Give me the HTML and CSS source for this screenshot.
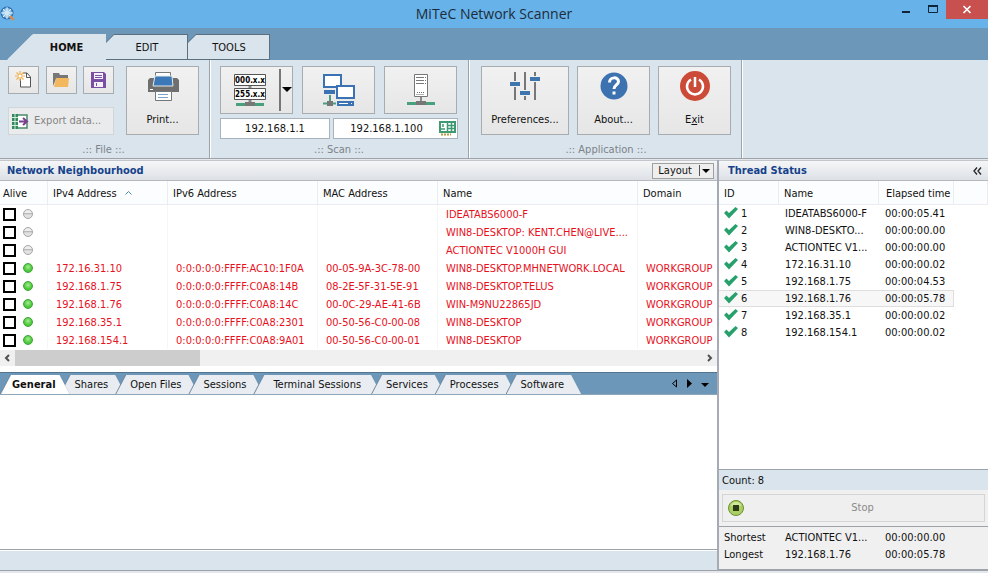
FILE: index.html
```html
<!DOCTYPE html>
<html lang="en">
<head>
  <meta charset="UTF-8">
  <meta name="viewport" content="width=device-width, initial-scale=1.0">
  <title>MiTeC Network Scanner</title>
  <link rel="stylesheet" href="styles.css">
</head>
<body>
  <header class="titlebar">
    <svg class="app-icon" width="16" height="16" viewBox="0 0 16 16">
      <circle cx="7" cy="7" r="6.5" fill="#2f6fae"/>
      <circle cx="7" cy="7" r="5" fill="#8fc3ea"/>
      <path d="M1 7h12M7 1v12M3 3l8 8M11 3l-8 8" stroke="#e6f3fc" fill="none"/>
      <circle cx="7" cy="7" r="2.5" fill="#cfe6f7"/>
      <path d="M10 10l3.5 4" stroke="#e08a4a" stroke-width="2.5"/>
    </svg>
    <h1>MiTeC Network Scanner</h1>
    <div class="window-buttons">
      <button class="win-btn" aria-label="Minimize"><svg width="10" height="14"><path d="M1 12h8" stroke="#10243a" stroke-width="2"/></svg></button>
      <button class="win-btn" aria-label="Maximize"><svg width="10" height="14"><path d="M.5 5.500h9v7h-9z" fill="none" stroke="#10243a"/><path d="M0 6h10" stroke="#10243a" stroke-width="2"/></svg></button>
      <button class="win-btn close" aria-label="Close"><svg width="10" height="9"><path d="M1.500 1l7 7M8.500 1l-7 7" stroke="#fff" stroke-width="1.700"/></svg></button>
    </div>
  </header>

  <nav class="ribbon-tabs">
    <button class="ribbon-tab home">HOME</button>
    <button class="ribbon-tab">EDIT</button>
    <button class="ribbon-tab">TOOLS</button>
  </nav>

  <section class="ribbon">
    <div class="group group-file">
      <div class="file-tools">
        <div class="file-left">
          <div class="small-row">
            <button class="tool small" aria-label="New">
              <svg width="20" height="18" viewBox="0 0 20 18">
                <path d="M6.500 8v8h10V6L13 2H9" fill="#fff" stroke="#555"/>
                <path d="M12.500 2v4.500h4" fill="none" stroke="#555"/>
                <path d="M6 0v10M1 5h10M2.500 1.500l7 7M9.500 1.500l-7 7" stroke="#f0b050" stroke-width="1.200"/>
                <circle cx="6" cy="5" r="1.500" fill="#fff"/>
              </svg>
            </button>
            <button class="tool small" aria-label="Open">
              <svg width="18" height="16" viewBox="0 0 18 16">
                <path d="M1 14V1h6l1 2h8v4H4z" fill="#777"/>
                <path d="M4 6h13l-1 9H2z" fill="#f3b75e"/>
              </svg>
            </button>
            <button class="tool small" aria-label="Save">
              <svg width="15" height="16" viewBox="0 0 15 16">
                <path d="M0 0h13l2 2v14H0z" fill="#7a4fa3"/>
                <path d="M3 1h9v6H3zM3 10h9v5H3z" fill="#f4f0f8"/>
                <path d="M4 3.500h7M4 5.500h7M5.500 11v3" stroke="#7a4fa3"/>
              </svg>
            </button>
          </div>
          <button class="tool export" disabled>
            <svg width="17" height="15" viewBox="0 0 17 15">
              <path d="M1 1h14v13H1z" fill="#fff" stroke="#4a8a6a" stroke-width="1.500"/>
              <path d="M0 0h6v15H0z" fill="#2f8a5c"/>
              <path d="M0 3.500h6M0 7.500h6M0 11.500h6M3 0v15" stroke="#d5eadf"/>
              <path d="M7 7.500h7M11 4l4 3.500L11 11" fill="none" stroke="#7a4090" stroke-width="2"/>
            </svg>
            Export data...
          </button>
        </div>
        <button class="tool large">
          <svg width="34" height="32" viewBox="0 0 34 32">
            <path d="M4 7h27l2 2v12H2V9z" fill="#6f6f6f"/>
            <path d="M9.500 1.500h15V8h-15z" fill="#fff" stroke="#777"/>
            <path d="M9 5h17l1 10H7z" fill="#3b78b8" stroke="#e8e8e8"/>
            <path d="M4 18.500h3" stroke="#fff"/>
            <path d="M9.500 20.500h16v9h-16z" fill="#fff" stroke="#777"/>
            <path d="M12 23.500h10M12 26.500h10" stroke="#7ba3cc"/>
          </svg>
          Print...
        </button>
      </div>
      <p class="group-name">.:: File ::.</p>
    </div>

    <div class="group group-scan">
      <div class="scan-tools">
        <div class="scan-row">
          <div class="tool medium split">
            <button class="plain" aria-label="Scan range">
              <svg width="34" height="36" viewBox="0 0 34 36">
                <path d="M17 14v16" stroke="#888" stroke-width="3"/>
                <path d="M1.500 2.500h31v11h-31zM1.500 16.500h31v11h-31z" fill="#fff" stroke="#555"/>
                <text class="icon-text" x="17" y="11">000.x.x</text>
                <text class="icon-text" x="17" y="25">255.x.x</text>
                <path d="M3 32.500h9M22 32.500h9" stroke="#49a07c" stroke-width="3"/>
                <path d="M12 30h10v4H12z" fill="#777"/>
              </svg>
            </button>
            <button class="plain drop" aria-label="Scan options"><svg width="10" height="6"><path d="M0 0h10L5 5z"/></svg></button>
          </div>
          <button class="tool medium" aria-label="Scan network">
            <svg width="34" height="34" viewBox="0 0 34 34">
              <path d="M8 22v7M1 30.500h13" stroke="#49a07c" stroke-width="2"/>
              <path d="M5 28h6v5H5z" fill="#777"/>
              <g fill="#fff" stroke="#3b72b4" stroke-width="2">
                <path d="M2 2h17v12H2z"/>
                <path d="M3 18h9v2H3z"/>
                <path d="M15 13h17v12H15z"/>
                <path d="M16 29h15v3H16z"/>
              </g>
              <path d="M26 30.500h3" stroke="#3b72b4"/>
            </svg>
          </button>
          <button class="tool medium" aria-label="Scan server">
            <svg width="30" height="34" viewBox="0 0 30 34">
              <path d="M8.500 1.500h13v22h-13z" fill="#fff" stroke="#777"/>
              <path d="M10 4.500h10M10 7.500h10M10 10.500h10" stroke="#777" stroke-dasharray="8 1 1"/>
              <path d="M11 19.500h8M10.500 21.500h8" stroke="#666" stroke-dasharray="1 1"/>
              <path d="M15 24v4" stroke="#888" stroke-width="2"/>
              <path d="M1 30.500h9M20 30.500h9" stroke="#49a07c" stroke-width="3"/>
              <path d="M10 28h10v4H10z" fill="#777"/>
            </svg>
          </button>
        </div>
        <div class="ip-row">
          <input type="text" class="ip-input" value="192.168.1.1" aria-label="First address">
          <div class="ip-box">
            <input type="text" value="192.168.1.100" aria-label="Last address">
            <svg width="17" height="15" viewBox="0 0 17 15">
              <path d="M1 1h15v10H1z" fill="#fff" stroke="#3f9a72" stroke-width="2"/>
              <path d="M8.500 1v10M12.500 1v10M8 4.500h8M8 7.500h8M4 3v3M2 8h4" stroke="#3f9a72" stroke-width="1.500"/>
              <path d="M2 13.500h10" stroke="#b59a3f" stroke-width="2" stroke-dasharray="2 1"/>
            </svg>
          </div>
        </div>
      </div>
      <p class="group-name">.:: Scan ::.</p>
    </div>

    <div class="group group-app">
      <div class="app-tools">
        <button class="tool large wide">
          <svg width="32" height="32" viewBox="0 0 32 32">
            <path d="M6 1v28M16 1v28M26 1v28" stroke="#777" stroke-width="2"/>
            <path d="M1 13h10M11 22h10M21 8h10" stroke="#f0f0f0" stroke-width="6"/>
            <path d="M1 13h10M11 22h10M21 8h10" stroke="#3f75ad" stroke-width="4"/>
          </svg>
          Preferences...
        </button>
        <button class="tool large">
          <svg width="32" height="32" viewBox="0 0 32 32">
            <circle cx="16" cy="15" r="13.500" fill="#3c72b0"/>
            <path d="M11.500 11.500c0-6 9-6 9-1 0 3.500-4.500 3.500-4.500 7.500" fill="none" stroke="#fff" stroke-width="3"/>
            <path d="M14.500 20.500h3v3h-3z" fill="#fff"/>
          </svg>
          About...
        </button>
        <button class="tool large">
          <svg width="32" height="32" viewBox="0 0 32 32">
            <circle cx="16" cy="15" r="15" fill="#cc4a38"/>
            <path d="M12 8.500a8 8 0 1 0 8 0M16 6v10" fill="none" stroke="#fff" stroke-width="2.500"/>
          </svg>
          <span>E<u>x</u>it</span>
        </button>
      </div>
      <p class="group-name">.:: Application ::.</p>
    </div>
  </section>

  <main class="panels">
    <section class="left-panel">
      <div class="panel-head">
        <h2>Network Neighbourhood</h2>
        <button class="layout-btn">Layout <svg width="12" height="12"><path d="M1.500 0v11" stroke="#555"/><path d="M4 4h8l-4 4z"/></svg></button>
      </div>

      <table class="hosts">
        <colgroup>
          <col class="c-alive"><col class="c-ipv4"><col class="c-ipv6"><col class="c-mac"><col class="c-name"><col>
        </colgroup>
        <thead>
          <tr>
            <th>Alive</th>
            <th>IPv4 Address <svg class="sort" width="7" height="4"><path d="M.5 3.500l3-3 3 3" fill="none" stroke="#4a8aa8"/></svg></th>
            <th>IPv6 Address</th>
            <th>MAC Address</th>
            <th>Name</th>
            <th>Domain</th>
          </tr>
        </thead>
        <tbody>
          <tr><td><input type="checkbox" aria-label="Select IDEATABS6000-F"><span class="dot"></span></td><td></td><td></td><td></td><td>IDEATABS6000-F</td><td></td></tr>
          <tr><td><input type="checkbox" aria-label="Select KENT.CHEN"><span class="dot"></span></td><td></td><td></td><td></td><td>WIN8-DESKTOP: KENT.CHEN@LIVE....</td><td></td></tr>
          <tr><td><input type="checkbox" aria-label="Select ACTIONTEC"><span class="dot"></span></td><td></td><td></td><td></td><td>ACTIONTEC V1000H GUI</td><td></td></tr>
          <tr><td><input type="checkbox" aria-label="Select 172.16.31.10"><span class="dot on"></span></td><td>172.16.31.10</td><td>0:0:0:0:0:FFFF:AC10:1F0A</td><td>00-05-9A-3C-78-00</td><td>WIN8-DESKTOP.MHNETWORK.LOCAL</td><td>WORKGROUP</td></tr>
          <tr><td><input type="checkbox" aria-label="Select 192.168.1.75"><span class="dot on"></span></td><td>192.168.1.75</td><td>0:0:0:0:0:FFFF:C0A8:14B</td><td>08-2E-5F-31-5E-91</td><td>WIN8-DESKTOP.TELUS</td><td>WORKGROUP</td></tr>
          <tr><td><input type="checkbox" aria-label="Select 192.168.1.76"><span class="dot on"></span></td><td>192.168.1.76</td><td>0:0:0:0:0:FFFF:C0A8:14C</td><td>00-0C-29-AE-41-6B</td><td>WIN-M9NU22865JD</td><td>WORKGROUP</td></tr>
          <tr><td><input type="checkbox" aria-label="Select 192.168.35.1"><span class="dot on"></span></td><td>192.168.35.1</td><td>0:0:0:0:0:FFFF:C0A8:2301</td><td>00-50-56-C0-00-08</td><td>WIN8-DESKTOP</td><td>WORKGROUP</td></tr>
          <tr><td><input type="checkbox" aria-label="Select 192.168.154.1"><span class="dot on"></span></td><td>192.168.154.1</td><td>0:0:0:0:0:FFFF:C0A8:9A01</td><td>00-50-56-C0-00-01</td><td>WIN8-DESKTOP</td><td>WORKGROUP</td></tr>
        </tbody>
      </table>

      <div class="scrollbar">
        <button class="plain" aria-label="Scroll left"><svg width="7" height="8"><path d="M5 1L2 4l3 3" fill="none" stroke="#505050" stroke-width="2"/></svg></button>
        <div class="track"><div class="thumb"></div></div>
        <button class="plain" aria-label="Scroll right"><svg width="7" height="8"><path d="M2 1l3 3-3 3" fill="none" stroke="#505050" stroke-width="2"/></svg></button>
      </div>

      <nav class="detail-tabs">
        <button class="detail-tab active">General</button>
        <button class="detail-tab">Shares</button>
        <button class="detail-tab">Open Files</button>
        <button class="detail-tab">Sessions</button>
        <button class="detail-tab roomy">Terminal Sessions</button>
        <button class="detail-tab">Services</button>
        <button class="detail-tab">Processes</button>
        <button class="detail-tab">Software</button>
        <div class="tab-arrows">
          <button class="plain" aria-label="Previous tab"><svg width="6" height="9"><path d="M5.500 1v7l-4-3.500z" fill="none" stroke="#000"/></svg></button>
          <button class="plain" aria-label="Next tab"><svg width="6" height="9"><path d="M1 0v9l5-4.500z"/></svg></button>
          <button class="plain" aria-label="Tab list"><svg width="8" height="9"><path d="M0 4h8L4 8z"/></svg></button>
        </div>
      </nav>
      <div class="detail"></div>
      <footer class="statusbar"></footer>
    </section>

    <section class="right-panel">
      <div class="panel-head">
        <h2>Thread Status</h2>
        <button class="plain" aria-label="Collapse"><svg width="9" height="8"><path d="M4 .5L1 4l3 3.500M8 .5L5 4l3 3.500" fill="none" stroke="#222" stroke-width="1.300"/></svg></button>
      </div>

      <div class="thread-list">
        <table class="threads">
          <colgroup>
            <col class="t-id"><col class="t-name"><col class="t-time"><col>
          </colgroup>
          <thead>
            <tr><th>ID</th><th>Name</th><th>Elapsed time</th><th></th></tr>
          </thead>
          <tbody>
            <tr><td><svg class="check" width="14" height="12"><use href="#check"/></svg>1</td><td>IDEATABS6000-F</td><td>00:00:05.41</td><td></td></tr>
            <tr><td><svg class="check" width="14" height="12"><use href="#check"/></svg>2</td><td>WIN8-DESKTO...</td><td>00:00:00.00</td><td></td></tr>
            <tr><td><svg class="check" width="14" height="12"><use href="#check"/></svg>3</td><td>ACTIONTEC V1...</td><td>00:00:00.00</td><td></td></tr>
            <tr><td><svg class="check" width="14" height="12"><use href="#check"/></svg>4</td><td>172.16.31.10</td><td>00:00:00.02</td><td></td></tr>
            <tr><td><svg class="check" width="14" height="12"><use href="#check"/></svg>5</td><td>192.168.1.75</td><td>00:00:04.53</td><td></td></tr>
            <tr class="selected"><td><svg class="check" width="14" height="12"><use href="#check"/></svg>6</td><td>192.168.1.76</td><td>00:00:05.78</td><td></td></tr>
            <tr><td><svg class="check" width="14" height="12"><use href="#check"/></svg>7</td><td>192.168.35.1</td><td>00:00:00.02</td><td></td></tr>
            <tr><td><svg class="check" width="14" height="12"><use href="#check"/></svg>8</td><td>192.168.154.1</td><td>00:00:00.02</td><td></td></tr>
          </tbody>
        </table>
      </div>

      <p class="count">Count: 8</p>
      <div class="stop-bar">
        <button class="stop-btn" disabled>
          <svg width="18" height="18" viewBox="0 0 18 18">
            <circle cx="9" cy="9" r="7.500" fill="#a9cf62" stroke="#6b9130"/>
            <path d="M4 7a5 4 0 0 1 10 0z" fill="#cfe89c"/>
            <path d="M6 6h6v6H6z" fill="#2c3a18"/>
          </svg>
          <span>Stop</span>
        </button>
      </div>
      <table class="threads summary">
        <colgroup>
          <col class="t-id"><col class="t-name"><col class="t-time"><col>
        </colgroup>
        <tbody>
          <tr><td>Shortest</td><td>ACTIONTEC V1...</td><td>00:00:00.00</td><td></td></tr>
          <tr><td>Longest</td><td>192.168.1.76</td><td>00:00:05.78</td><td></td></tr>
        </tbody>
      </table>
    </section>
  </main>

  <svg class="symbols" width="0" height="0">
    <symbol id="check" viewBox="0 0 14 12"><path d="M0 6l2.500-2.500L5 6l6.500-6L14 2 5 11.500z" fill="#27a06c"/></symbol>
  </svg>
</body>
</html>
```
FILE: styles.css
```css
:root {
  --title: #67b2e8;
  --strip: #6c97b9;
  --ribbon: #dae4ec;
  --line: #9da3a9;
  --heading: #15428b;
  --red: #e8101c;
}

* {
  box-sizing: border-box;
  margin: 0;
  padding: 0;
}

body {
  display: flex;
  flex-direction: column;
  min-height: 100vh;
  padding-bottom: 2px;
  background: #e4e8ec;
  font-family: "DejaVu Sans Condensed", Tahoma, sans-serif;
  font-size: 11px;
  line-height: 14px;
  color: #111;
  overflow: hidden;
}

button,
input {
  font: inherit;
  color: inherit;
}

svg {
  display: block;
  flex: none;
}

.symbols {
  position: absolute;
}

.plain {
  display: flex;
  align-items: center;
  justify-content: center;
  border: none;
  background: none;
}

/* Title bar */
.titlebar {
  display: grid;
  grid-template-columns: 1fr auto 1fr;
  align-items: center;
  height: 28px;
  background: var(--title);
}

.titlebar h1 {
  font: 400 14px/20px "Open Sans", sans-serif;
  color: #1c2c3c;
}

.window-buttons {
  display: flex;
  align-self: start;
  justify-content: flex-end;
}

.win-btn {
  display: flex;
  align-items: flex-start;
  justify-content: center;
  width: 27px;
  height: 19px;
  border: none;
  background: none;
}

.win-btn.close {
  align-items: center;
  width: 42px;
  background: #c8504f;
}

/* Ribbon */
.ribbon-tabs {
  display: flex;
  align-items: flex-end;
  height: 32px;
  padding-left: 7px;
  background: var(--strip);
}

.ribbon-tab {
  position: relative;
  z-index: 0;
  width: 82px;
  height: 26px;
  padding-top: 1px;
  border: none;
  background: #5a6f80;
  clip-path: polygon(0 8px, 8px 0, 100% 0, 100% 100%, 0 100%);
}

.ribbon-tab::before {
  content: "";
  position: absolute;
  inset: 1px 1px 1px 0;
  z-index: -1;
  background: var(--ribbon);
  clip-path: polygon(0 8px, 8px 0, 100% 0, 100% 100%, 0 100%);
}

.ribbon-tab.home {
  width: 99px;
  padding-left: 20px;
  background: var(--ribbon);
  font-weight: bold;
  clip-path: polygon(0 100%, 26px 0, 100% 0, 100% 100%);
}

.ribbon {
  display: flex;
  height: 99px;
  background: var(--ribbon);
  border-bottom: 1px solid var(--line);
}

.group {
  display: flex;
  flex-direction: column;
  justify-content: space-between;
  padding: 6px 10px 1px 10px;
  border-right: 1px solid var(--line);
  box-shadow: 1px 0 #fff;
}

.group-file {
  padding-left: 8px;
}

.group-app {
  padding-left: 12px;
}

.group-name {
  text-align: center;
  color: #7c838a;
}

.tool {
  display: flex;
  align-items: center;
  justify-content: center;
  border: 1px solid #a7acb1;
  background: linear-gradient(#f1f1f1, #e6e6e6);
}

.file-tools {
  display: flex;
  gap: 12px;
}

.small-row {
  display: flex;
  justify-content: space-between;
  width: 106px;
  margin-bottom: 13px;
}

.small {
  width: 31px;
  height: 28px;
}

.export {
  justify-content: flex-start;
  gap: 5px;
  width: 106px;
  height: 28px;
  padding-left: 3px;
  border-color: #d3d6d9;
  background: #eaebec;
  color: #858585;
}

.large {
  flex-direction: column;
  gap: 10px;
  width: 73px;
  height: 69px;
  padding-bottom: 3px;
}

.wide {
  width: 88px;
}

.scan-row {
  display: flex;
  gap: 9px;
}

.medium {
  width: 73px;
  height: 48px;
}

.split .plain {
  width: 59px;
  height: 42px;
}

.split .drop {
  width: 13px;
  border-left: 2px solid #777;
}

.icon-text {
  font: bold 8px "DejaVu Sans Condensed", sans-serif;
  text-anchor: middle;
}

.ip-row {
  display: flex;
  gap: 3px;
  margin-top: 4px;
}

.ip-input,
.ip-box {
  width: 110px;
  height: 21px;
  border: 1px solid #a7b4bf;
  background: #fff;
  text-align: center;
}

.ip-box {
  display: flex;
  align-items: center;
  width: 125px;
}

.ip-box input {
  width: 105px;
  border: none;
  background: none;
  text-align: center;
}

.app-tools {
  display: flex;
  gap: 8px;
}

/* Panels */
.panels {
  flex: 1;
  display: grid;
  grid-template-columns: 1fr 269px;
  margin-top: 1px;
  border-bottom: 1px solid var(--line);
}

.left-panel,
.right-panel {
  display: flex;
  flex-direction: column;
  min-width: 0;
  background: #fff;
}

.left-panel {
  border-right: 2px solid #a5aab4;
}

.panel-head {
  display: flex;
  align-items: center;
  justify-content: space-between;
  height: 21px;
  padding: 1px 3px 0 7px;
  border-top: 1px solid #c3c7cc;
  border-bottom: 1px solid #b5b9be;
  background: linear-gradient(#f5f6f7, #dde1e6);
}

.right-panel .panel-head {
  padding: 1px 6px 0 9px;
}

.panel-head h2 {
  font-size: 11px;
  font-weight: bold;
  color: var(--heading);
}

.layout-btn {
  display: flex;
  align-items: center;
  gap: 6px;
  height: 16px;
  padding: 0 3px 0 5px;
  border: 1px solid #a0a0a0;
  background: #eeeeee;
}

table {
  width: 100%;
  border-collapse: separate;
  border-spacing: 0;
  table-layout: fixed;
}

th {
  height: 24px;
  padding: 2px 0 0 5px;
  border-right: 1px solid #e9edf1;
  border-bottom: 1px solid #e9edf1;
  background: #fcfdfe;
  font-weight: normal;
  text-align: left;
  white-space: nowrap;
}

td {
  padding-top: 1px;
  white-space: nowrap;
  overflow: hidden;
}

.c-alive { width: 48px; }
.c-ipv4 { width: 120px; }
.c-ipv6 { width: 150px; }
.c-mac { width: 120px; }
.c-name { width: 200px; }

.hosts td {
  height: 18px;
  padding-left: 8px;
  border-right: 1px solid #f4f6f8;
  color: var(--red);
}

.hosts th:first-child,
.hosts td:first-child {
  padding-left: 3px;
}

.hosts td:first-child {
  padding-top: 0;
  line-height: 0;
}

.hosts tr > :last-child {
  border-right: none;
}

.sort {
  display: inline-block;
  margin-left: 5px;
  vertical-align: 2px;
}

.hosts input {
  appearance: none;
  display: inline-block;
  width: 13px;
  height: 13px;
  border: 2px solid #000;
  background: #fff;
  vertical-align: middle;
}

.dot {
  display: inline-block;
  width: 10px;
  height: 10px;
  margin-left: 7px;
  border: 1px solid #a5a5a5;
  border-radius: 50%;
  background: linear-gradient(#ededed 40%, #aaa 45%, #e2e2e2 60%);
  vertical-align: middle;
}

.dot.on {
  border-color: #3da336;
  background: radial-gradient(circle at 4px 3px, #a5ee90, #4cc83c 60%);
}

.scrollbar {
  display: flex;
  height: 16px;
  margin: 1px 0 6px;
  background: #f0f0f0;
}

.scrollbar .plain {
  width: 15px;
}

.track {
  flex: 1;
}

.thumb {
  width: 27%;
  height: 100%;
  background: #cdcdcd;
}

/* Detail tabs */
.detail-tabs {
  display: flex;
  align-items: flex-end;
  height: 23px;
  border-top: 1px solid #53748f;
  border-bottom: 1px solid #8fa5b8;
  background: var(--strip);
}

.detail-tab {
  position: relative;
  z-index: 0;
  height: 19px;
  margin-left: -10px;
  padding: 1px 17px 0 15px;
  border: none;
  background: #7089a0;
  clip-path: polygon(0 100%, 10px 0, calc(100% - 10px) 0, 100% 100%);
}

.detail-tab::before {
  content: "";
  position: absolute;
  inset: 0 0 0 1px;
  z-index: -1;
  background: #e9edf2;
  clip-path: polygon(0 100%, 10px 0, 100% 0, 100% 100%);
}

.detail-tab.active {
  z-index: 1;
  margin-left: 0;
  padding: 1px 14px 0 12px;
  font-weight: bold;
}

.detail-tab.active::before {
  background: #fff;
}

.detail-tab.roomy {
  padding: 1px 20px 0 20px;
}

.tab-arrows {
  display: flex;
  align-self: center;
  gap: 9px;
  margin-left: auto;
  padding-right: 8px;
}

.detail {
  flex: 1;
  border-bottom: 1px solid var(--line);
}

.statusbar {
  height: 20px;
  border-top: 1px solid #fff;
  background: #d9e4ec;
}

/* Thread status */
.t-id { width: 60px; }
.t-name { width: 100px; }
.t-time { width: 75px; }

.threads th:nth-child(3) {
  padding-left: 7px;
}

.threads td {
  height: 17px;
  padding-left: 6px;
}

.threads td:first-child {
  padding-left: 5px;
}

.threads .selected td:not(:last-child) {
  padding-top: 0;
  border-top: 1px solid #dedede;
  border-bottom: 1px solid #dedede;
  background: #f7f7f7;
}

.threads .selected td:nth-child(3) {
  border-right: 1px solid #dedede;
}

.check {
  display: inline-block;
  margin-right: 3px;
  vertical-align: -2px;
}

.thread-list {
  flex: 1;
}

.count {
  height: 21px;
  padding: 4px 3px 0;
  border-top: 1px solid var(--line);
  background: #d9e4ec;
}

.stop-bar {
  padding: 4px 3px;
  background: #f0f0f0;
  border-bottom: 1px solid var(--line);
}

.stop-btn {
  display: flex;
  align-items: center;
  width: 100%;
  height: 28px;
  padding: 0 4px;
  border: 1px solid #d5d5d5;
  background: #efefef;
  color: #8a8a8a;
}

.stop-btn span {
  flex: 1;
}

.summary {
  height: 43px;
  padding: 2px 0 6px;
  border-bottom: 1px solid var(--line);
  background: #f0f0f0;
}
```
